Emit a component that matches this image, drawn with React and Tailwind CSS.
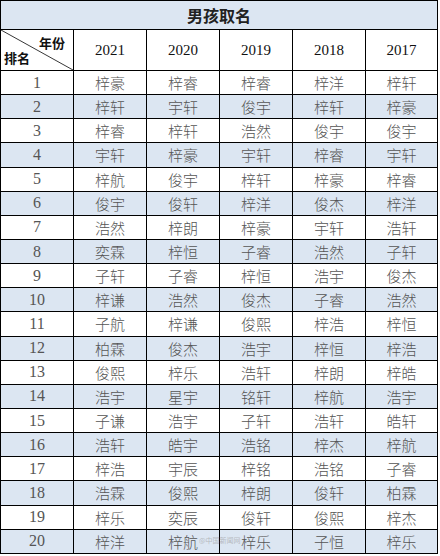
import React from "react";

const years = ["2021", "2020", "2019", "2018", "2017"];

const rows = [
  ["梓豪", "梓睿", "梓睿", "梓洋", "梓轩"],
  ["梓轩", "宇轩", "俊宇", "梓轩", "梓豪"],
  ["梓睿", "梓轩", "浩然", "俊宇", "俊宇"],
  ["宇轩", "梓豪", "宇轩", "梓睿", "宇轩"],
  ["梓航", "俊宇", "梓轩", "梓豪", "梓睿"],
  ["俊宇", "俊轩", "梓洋", "俊杰", "梓洋"],
  ["浩然", "梓朗", "梓豪", "宇轩", "浩轩"],
  ["奕霖", "梓恒", "子睿", "浩然", "子轩"],
  ["子轩", "子睿", "梓恒", "浩宇", "俊杰"],
  ["梓谦", "浩然", "俊杰", "子睿", "浩然"],
  ["子航", "梓谦", "俊熙", "梓浩", "梓恒"],
  ["柏霖", "俊杰", "浩宇", "梓恒", "梓浩"],
  ["俊熙", "梓乐", "浩轩", "梓朗", "梓皓"],
  ["浩宇", "星宇", "铭轩", "梓航", "浩宇"],
  ["子谦", "浩宇", "子轩", "浩轩", "皓轩"],
  ["浩轩", "皓宇", "浩铭", "梓杰", "梓航"],
  ["梓浩", "宇辰", "梓铭", "浩铭", "子睿"],
  ["浩霖", "俊熙", "梓朗", "俊轩", "柏霖"],
  ["梓乐", "奕辰", "俊轩", "俊熙", "梓杰"],
  ["梓洋", "梓航", "梓乐", "子恒", "梓乐"],
];

const serif = "font-['Liberation_Serif','Noto_Sans_CJK_SC',serif]";
const cjk = "font-['Noto_Sans_CJK_SC',sans-serif]";

export default function App() {
  return (
    <div className="w-[440px] h-[556px] bg-white overflow-hidden relative">
      <table className="border-collapse w-[437px] table-fixed">
        <colgroup>
          <col className="w-[73px]" />
          <col className="w-[73px]" />
          <col className="w-[73px]" />
          <col className="w-[73px]" />
          <col className="w-[73px]" />
          <col className="w-[72px]" />
        </colgroup>
        <tbody>
          <tr className="h-[29px] bg-[#dce6f2]">
            <td colSpan={6} className={`border border-black text-center text-[16px] font-bold text-[#222] ${cjk}`}>
              男孩取名
            </td>
          </tr>
          <tr className="h-[41px] bg-white">
            <td className="border border-black relative p-0">
              <svg className="absolute inset-0 w-full h-full" viewBox="0 0 73 41" preserveAspectRatio="none">
                <line x1="0" y1="0" x2="73" y2="41" stroke="#333" strokeWidth="1" />
              </svg>
              <span className={`absolute right-[8px] top-[3px] text-[13px] font-bold text-[#111] ${cjk}`}>年份</span>
              <span className={`absolute left-[3px] bottom-[3px] text-[13px] font-bold text-[#111] ${cjk}`}>排名</span>
            </td>
            {years.map((y) => (
              <td key={y} className={`border border-black text-center text-[15px] text-[#111] ${serif}`}>
                {y}
              </td>
            ))}
          </tr>
          {rows.map((r, i) => (
            <tr key={i} className={`h-[24.15px] ${i % 2 === 1 ? "bg-[#dce6f2]" : "bg-white"}`}>
              <td className={`border border-black text-center text-[16px] leading-none text-[#555] p-0 ${serif}`}>
                {i + 1}
              </td>
              {r.map((n, j) => (
                <td key={j} className={`border border-black text-center text-[15px] leading-none font-light text-[#555] p-0 ${cjk}`}>
                  {n}
                </td>
              ))}
            </tr>
          ))}
        </tbody>
      </table>
      <div className={`absolute left-[199px] top-[537px] text-[7px] leading-none text-[#999]/60 ${cjk}`}>
        @中国新闻网
      </div>
    </div>
  );
}
